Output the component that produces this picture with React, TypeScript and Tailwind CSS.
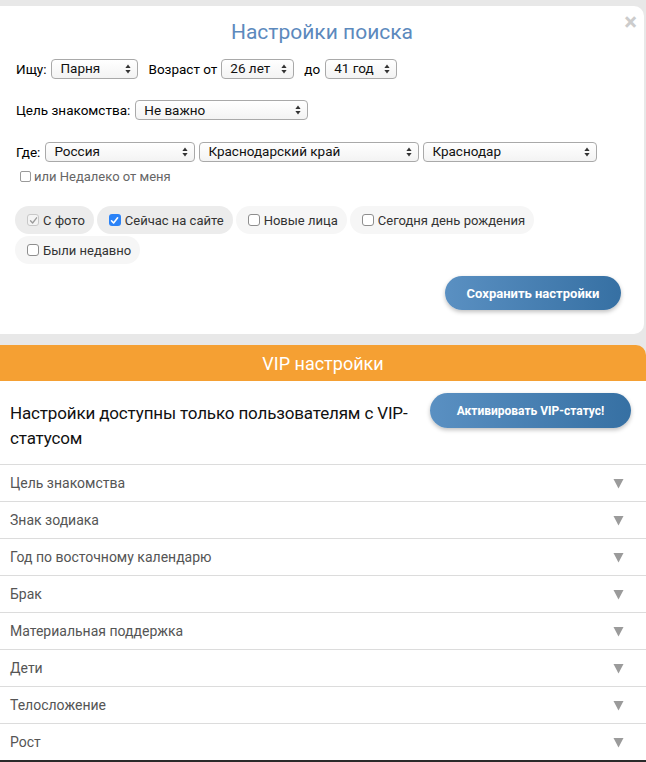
import React from 'react'

const font = { fontFamily: 'Roboto, "Liberation Sans", sans-serif' }

function Select({ value, w }: { value: string; w: string }) {
  return (
    <div
      className={`${w} h-[20px] flex items-center justify-between border border-[#a9a9a9] rounded-[4px] bg-gradient-to-b from-white to-[#f3f3f3] pl-[8px] pr-[6px] text-[13.5px] text-[#111] shrink-0`}
    >
      <span className="leading-none">{value}</span>
      <svg width="6" height="10" viewBox="0 0 6 10" className="shrink-0">
        <path d="M3 0.5 L5.6 4 L0.4 4 Z" fill="#333" />
        <path d="M3 9.5 L5.6 6 L0.4 6 Z" fill="#333" />
      </svg>
    </div>
  )
}

function Box({ state }: { state: 'off' | 'on' | 'disabled' }) {
  if (state === 'on') {
    return (
      <span className="w-[12px] h-[12px] rounded-[3px] bg-[#2a82f7] flex items-center justify-center shrink-0">
        <svg width="9" height="9" viewBox="0 0 9 9">
          <path d="M1.5 4.8 L3.6 7 L7.6 1.8" stroke="white" strokeWidth="1.6" fill="none" strokeLinecap="round" strokeLinejoin="round" />
        </svg>
      </span>
    )
  }
  if (state === 'disabled') {
    return (
      <span className="w-[12px] h-[12px] rounded-[3px] border border-[#c8c8c8] bg-[#f4f4f4] flex items-center justify-center shrink-0">
        <svg width="9" height="9" viewBox="0 0 9 9">
          <path d="M1.5 4.8 L3.6 7 L7.6 1.8" stroke="#9a9a9a" strokeWidth="1.3" fill="none" strokeLinecap="round" strokeLinejoin="round" />
        </svg>
      </span>
    )
  }
  return <span className="w-[12px] h-[12px] rounded-[3px] border border-[#8e8e8e] bg-white shrink-0" />
}

const pills: { label: string; state: 'off' | 'on' | 'disabled'; dark: boolean }[] = [
  { label: 'С фото', state: 'disabled', dark: true },
  { label: 'Сейчас на сайте', state: 'on', dark: true },
  { label: 'Новые лица', state: 'off', dark: false },
  { label: 'Сегодня день рождения', state: 'off', dark: false },
  { label: 'Были недавно', state: 'off', dark: false },
]

const vipRows = [
  'Цель знакомства',
  'Знак зодиака',
  'Год по восточному календарю',
  'Брак',
  'Материальная поддержка',
  'Дети',
  'Телосложение',
  'Рост',
]

export default function App() {
  return (
    <div className="min-h-screen bg-[#e8e8e8] pt-[6px]" style={font}>
      {/* Search settings */}
      <div className="relative bg-white rounded-r-[10px] mr-[2px] pb-[24px]">
        <button className="absolute right-[7px] top-[4px] text-[24px] leading-none font-bold text-[#cccccc]">×</button>
        <h2 className="pt-[12px] text-center text-[21px] leading-[28px] text-[#5c89bd]">Настройки поиска</h2>

        <div className="mt-[13px] px-[16px] flex items-center text-[13.5px] text-black">
          <span>Ищу:</span>
          <div className="ml-[5px]"><Select value="Парня" w="w-[87px]" /></div>
          <span className="ml-[10px]">Возраст от</span>
          <div className="ml-[4px]"><Select value="26 лет" w="w-[73px]" /></div>
          <span className="ml-[10px]">до</span>
          <div className="ml-[5px]"><Select value="41 год" w="w-[72px]" /></div>
        </div>

        <div className="mt-[21px] px-[16px] flex items-center text-[13.5px] text-black">
          <span>Цель знакомства:</span>
          <div className="ml-[5px]"><Select value="Не важно" w="w-[173px]" /></div>
        </div>

        <div className="mt-[21px] px-[16px] flex items-center text-[13.5px] text-black">
          <span>Где:</span>
          <div className="ml-[5px] flex gap-[4px]">
            <Select value="Россия" w="w-[150px]" />
            <Select value="Краснодарский край" w="w-[220px]" />
            <Select value="Краснодар" w="w-[174px]" />
          </div>
        </div>

        <label className="mt-[5px] ml-[20px] flex items-center gap-[3px] text-[13px] text-[#666]">
          <span className="w-[11px] h-[11px] rounded-[2px] border border-[#9a9a9a] bg-white" />
          <span>или Недалеко от меня</span>
        </label>

        <div className="mt-[20px] px-[15px] flex flex-wrap gap-x-[3px] gap-y-[2px]">
          {pills.map((p) => (
            <div
              key={p.label}
              className={`h-[28px] rounded-full pl-[12px] pr-[9px] flex items-center gap-[4px] text-[13px] text-[#333] ${p.dark ? 'bg-[#ececec]' : 'bg-[#f6f6f6]'}`}
            >
              <Box state={p.state} />
              <span>{p.label}</span>
            </div>
          ))}
        </div>

        <div className="mt-[12px] flex justify-end pr-[23px]">
          <button className="w-[176px] h-[34px] rounded-full bg-gradient-to-r from-[#5a90c2] to-[#3670a3] text-white text-[13px] font-bold shadow-[0_2px_4px_rgba(0,0,0,0.25)]">
            Сохранить настройки
          </button>
        </div>
      </div>

      {/* VIP */}
      <div className="mt-[11px] h-[36px] bg-[#f5a033] rounded-tr-[10px] flex items-center justify-center text-white text-[18px]">
        VIP настройки
      </div>
      <div className="bg-white">
        <div className="flex justify-between items-start pl-[10px] pr-[15px] pt-[12px] pb-[13px]">
          <p className="w-[410px] text-[17px] tracking-[-0.15px] leading-[25px] text-[#111] mt-[8px]">
            Настройки доступны только пользователям с VIP-статусом
          </p>
          <button className="w-[201px] h-[35px] rounded-full bg-gradient-to-r from-[#5a90c2] to-[#3670a3] text-white text-[12px] font-bold shadow-[0_2px_4px_rgba(0,0,0,0.25)]">
            Активировать VIP-статус!
          </button>
        </div>
        {vipRows.map((r) => (
          <div key={r} className="h-[37px] border-t border-[#dcdcdc] flex items-center justify-between pl-[10px] pr-[22px] text-[14px] text-[#555]">
            <span>{r}</span>
            <svg width="11" height="11" viewBox="0 0 11 11">
              <path d="M0.5 1 L10.5 1 L5.5 10.5 Z" fill="#9b9b9b" />
            </svg>
          </div>
        ))}
        <div className="h-[2px] bg-[#2a2a2a]" />
      </div>
    </div>
  )
}
